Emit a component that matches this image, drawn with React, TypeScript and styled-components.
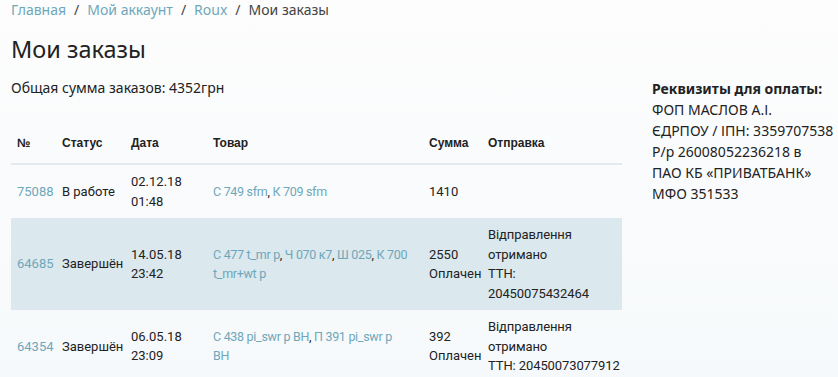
import React from "react";
import styled, { createGlobalStyle } from "styled-components";

const GlobalStyle = createGlobalStyle`
    html, body {
        margin: 0;
        padding: 0;
        background: linear-gradient(180deg, #fdfdfd 0%, #f6f9fb 100%);
        min-height: 100%;
    }
    body {
        font-family: "Noto Sans", "Open Sans", sans-serif;
        color: #222;
        font-size: 14px;
    }
`;

const LINK = "#6fa7ba";

const Page = styled.div`
    padding: 0 0 0 11px;
    height: 377px;
    overflow: hidden;
`;

const Crumbs = styled.nav`
    display: flex;
    gap: 8px;
    align-items: center;
    font-size: 14px;
    line-height: 20px;
    color: #444;
`;

const Crumb = styled.a<{ current?: boolean }>`
    color: ${({ current }) => (current ? "#444" : LINK)};
    text-decoration: none;
`;

const Sep = styled.span`
    color: #444;
`;

const Title = styled.h1`
    margin: 14px 0 0;
    font-size: 23.5px;
    font-weight: 400;
    line-height: 30px;
    color: #222;
`;

const Columns = styled.div`
    display: flex;
    align-items: flex-start;
    margin-top: 14px;
`;

const Main = styled.div`
    width: 611px;
`;

const Total = styled.p`
    margin: 0;
    line-height: 20px;
`;

const Table = styled.table`
    width: 100%;
    margin-top: 25px;
    border-collapse: collapse;
    table-layout: fixed;
`;

const Th = styled.th`
    text-align: left;
    font-family: "Liberation Sans", Arial, sans-serif;
    font-weight: 700;
    font-size: 12px;
    line-height: 14px;
    padding: 13px 6px 13px;
    border-bottom: 2px solid #e1eaee;
    white-space: nowrap;
`;

const Tr = styled.tr<{ shaded?: boolean }>`
    background: ${({ shaded }) => (shaded ? "#dbe8ed" : "transparent")};
    & + & td {
        border-top: 1px solid #e1eaee;
    }
`;

const Td = styled.td`
    padding: 7px 6px;
    line-height: 19.5px;
    vertical-align: middle;
    font-family: Roboto, "Noto Sans", sans-serif;
    font-size: 13px;
`;

const GoodsTd = styled(Td)`
    padding-right: 14px;
    font-size: 12.5px;
    letter-spacing: -0.3px;
`;

const ShipTd = styled(Td)`
    padding-right: 2px;
    letter-spacing: -0.1px;
`;

const Link = styled.a`
    color: ${LINK};
    text-decoration: none;
`;

const Side = styled.aside`
    margin-left: 30px;
    line-height: 21px;
    font-size: 14px;
`;

const SideTitle = styled.div`
    font-weight: 700;
`;

type Order = {
    id: string;
    status: string;
    date: string;
    time: string;
    goods: string[];
    sum: string;
    paid?: boolean;
    ship?: string[];
};

const orders: Order[] = [
    { id: "75088", status: "В работе", date: "02.12.18", time: "01:48", goods: ["С 749 sfm", "К 709 sfm"], sum: "1410" },
    {
        id: "64685",
        status: "Завершён",
        date: "14.05.18",
        time: "23:42",
        goods: ["С 477 t_mr р", "Ч 070 к7", "Ш 025", "К 700 t_mr+wt р"],
        sum: "2550",
        paid: true,
        ship: ["Відправлення", "отримано", "ТТН:", "20450075432464"],
    },
    {
        id: "64354",
        status: "Завершён",
        date: "06.05.18",
        time: "23:09",
        goods: ["С 438 pi_swr р ВН", "П 391 pi_swr р ВН"],
        sum: "392",
        paid: true,
        ship: ["Відправлення", "отримано", "ТТН: 20450073077912"],
    },
];

export default function App() {
    return (
        <>
            <GlobalStyle />
            <Page>
                <Crumbs>
                    <Crumb href="#">Главная</Crumb>
                    <Sep>/</Sep>
                    <Crumb href="#">Мой аккаунт</Crumb>
                    <Sep>/</Sep>
                    <Crumb href="#">Roux</Crumb>
                    <Sep>/</Sep>
                    <Crumb current>Мои заказы</Crumb>
                </Crumbs>
                <Title>Мои заказы</Title>
                <Columns>
                    <Main>
                        <Total>Общая сумма заказов: 4352грн</Total>
                        <Table>
                            <colgroup>
                                <col style={{ width: 45 }} />
                                <col style={{ width: 69 }} />
                                <col style={{ width: 82 }} />
                                <col style={{ width: 216 }} />
                                <col style={{ width: 59 }} />
                                <col />
                            </colgroup>
                            <thead>
                                <tr>
                                    <Th>№</Th>
                                    <Th>Статус</Th>
                                    <Th>Дата</Th>
                                    <Th>Товар</Th>
                                    <Th>Сумма</Th>
                                    <Th>Отправка</Th>
                                </tr>
                            </thead>
                            <tbody>
                                {orders.map((o, i) => (
                                    <Tr key={o.id} shaded={i === 1}>
                                        <Td>
                                            <Link href="#">{o.id}</Link>
                                        </Td>
                                        <Td>{o.status}</Td>
                                        <Td>
                                            {o.date}
                                            <br />
                                            {o.time}
                                        </Td>
                                        <GoodsTd>
                                            {o.goods.map((g, j) => (
                                                <React.Fragment key={g}>
                                                    {j > 0 && ", "}
                                                    <Link href="#">{g}</Link>
                                                </React.Fragment>
                                            ))}
                                        </GoodsTd>
                                        <Td>
                                            {o.sum}
                                            {o.paid && (
                                                <>
                                                    <br />
                                                    Оплачен
                                                </>
                                            )}
                                        </Td>
                                        <ShipTd>
                                            {o.ship?.map((s, j) => (
                                                <React.Fragment key={s}>
                                                    {j > 0 && <br />}
                                                    {s}
                                                </React.Fragment>
                                            ))}
                                        </ShipTd>
                                    </Tr>
                                ))}
                            </tbody>
                        </Table>
                    </Main>
                    <Side>
                        <SideTitle>Реквизиты для оплаты:</SideTitle>
                        ФОП МАСЛОВ А.І.
                        <br />
                        ЄДРПОУ / ІПН: 3359707538
                        <br />
                        Р/р 26008052236218 в
                        <br />
                        ПАО КБ «ПРИВАТБАНК»
                        <br />
                        МФО 351533
                    </Side>
                </Columns>
            </Page>
        </>
    );
}
